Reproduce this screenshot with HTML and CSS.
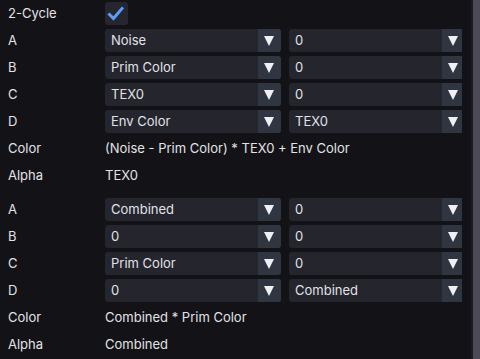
FILE: index.html
```html
<!DOCTYPE HTML>
<html>
<head>
  <meta name="viewport" content="width=device-width, initial-scale=1">
  <link rel="icon" href="data:,">
  <link rel="stylesheet" href="styles.css">
</head>
<body>
<div class="window">
  <div class="content">
    <div class="grid">
      <span class="label">2-Cycle</span>
      <span class="check"><svg width="23" height="23" viewBox="0 0 23 23"><path d="M4.5 12.5 L8.5 16.5 L17 6.5" fill="none" stroke="#5b9cf6" stroke-width="3" stroke-linecap="square"/></svg></span>
      <span></span>

      <span class="label">A</span>
      <div class="combo"><span class="val">Noise</span><span class="arrow"></span></div>
      <div class="combo"><span class="val">0</span><span class="arrow"></span></div>

      <span class="label">B</span>
      <div class="combo"><span class="val">Prim Color</span><span class="arrow"></span></div>
      <div class="combo"><span class="val">0</span><span class="arrow"></span></div>

      <span class="label">C</span>
      <div class="combo"><span class="val">TEX0</span><span class="arrow"></span></div>
      <div class="combo"><span class="val">0</span><span class="arrow"></span></div>

      <span class="label">D</span>
      <div class="combo"><span class="val">Env Color</span><span class="arrow"></span></div>
      <div class="combo"><span class="val">TEX0</span><span class="arrow"></span></div>

      <span class="label">Color</span>
      <span class="text">(Noise - Prim Color) * TEX0 + Env Color</span>

      <span class="label">Alpha</span>
      <span class="text">TEX0</span>
    </div>

    <div class="grid second">
      <span class="label">A</span>
      <div class="combo"><span class="val">Combined</span><span class="arrow"></span></div>
      <div class="combo"><span class="val">0</span><span class="arrow"></span></div>

      <span class="label">B</span>
      <div class="combo"><span class="val">0</span><span class="arrow"></span></div>
      <div class="combo"><span class="val">0</span><span class="arrow"></span></div>

      <span class="label">C</span>
      <div class="combo"><span class="val">Prim Color</span><span class="arrow"></span></div>
      <div class="combo"><span class="val">0</span><span class="arrow"></span></div>

      <span class="label">D</span>
      <div class="combo"><span class="val">0</span><span class="arrow"></span></div>
      <div class="combo"><span class="val">Combined</span><span class="arrow"></span></div>

      <span class="label">Color</span>
      <span class="text">Combined * Prim Color</span>

      <span class="label">Alpha</span>
      <span class="text">Combined</span>
    </div>
  </div>
  <div class="scrollbar"><div class="grab"></div></div>
</div>
</body>
</html>
```

FILE: styles.css
```css
html, body {margin: 0; padding: 0;}
body {
  background-color: #131317;
  color: #e2e2e6;
  font-family: Inter, "Noto Sans", sans-serif;
  font-size: 13px;
}
.window {display: flex; width: 480px; height: 359px; overflow: hidden;}
.content {width: 454px; padding: 2px 0 0 8px; overflow: hidden; flex: none;}
.grid {
  display: grid;
  grid-template-columns: 89px 176px 176px;
  grid-auto-rows: 23px;
  column-gap: 8px;
  row-gap: 4px;
}
.second {margin-top: 11px;}
.label, .text {line-height: 23px; white-space: nowrap;}
.text {grid-column: 2 / 4;}
.check {
  width: 23px; height: 23px;
  background-color: #25262e;
  border-radius: 3px;
}
.check svg {display: block;}
.combo {
  display: flex;
  background-color: #24252d;
  border-radius: 3px;
  overflow: hidden;
}
.val {flex: 1; padding-left: 6px; line-height: 23px; white-space: nowrap;}
.arrow {
  width: 23px;
  background-color: #2f3541;
  position: relative;
}
.arrow:before {
  content: "";
  position: absolute;
  left: 6px; top: 7px;
  border-left: 5.5px solid transparent;
  border-right: 5.5px solid transparent;
  border-top: 10px solid #f0f0f4;
}
.scrollbar {flex: 1; margin-left: 9px; background-color: #1b1b21; padding-left: 2px;}
.grab {height: 100%; background-color: #4b4a55;}
```
